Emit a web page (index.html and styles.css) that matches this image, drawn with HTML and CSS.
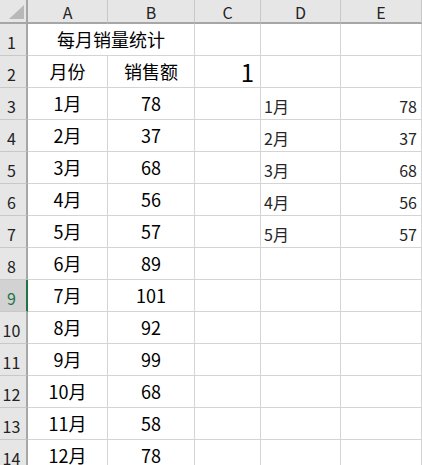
FILE: index.html
```html
<!DOCTYPE html>
<html lang="zh">
<head>
<meta charset="utf-8">
<link rel="stylesheet" href="styles.css">
</head>
<body>
<div class="sheet">
  <div class="corner"><span class="tri"></span></div>
  <div class="ch">A</div><div class="ch">B</div><div class="ch">C</div><div class="ch">D</div><div class="ch">E</div>

  <div class="rh">1</div>
  <div class="c merged ctr">每月销量统计</div><div class="c"></div><div class="c"></div><div class="c"></div>

  <div class="rh">2</div>
  <div class="c ctr">月份</div><div class="c ctr">销售额</div><div class="c big">1</div><div class="c"></div><div class="c"></div>

  <div class="rh">3</div>
  <div class="c ctr">1月</div><div class="c ctr">78</div><div class="c"></div><div class="c sm">1月</div><div class="c sm r">78</div>

  <div class="rh">4</div>
  <div class="c ctr">2月</div><div class="c ctr">37</div><div class="c"></div><div class="c sm">2月</div><div class="c sm r">37</div>

  <div class="rh">5</div>
  <div class="c ctr">3月</div><div class="c ctr">68</div><div class="c"></div><div class="c sm">3月</div><div class="c sm r">68</div>

  <div class="rh">6</div>
  <div class="c ctr">4月</div><div class="c ctr">56</div><div class="c"></div><div class="c sm">4月</div><div class="c sm r">56</div>

  <div class="rh">7</div>
  <div class="c ctr">5月</div><div class="c ctr">57</div><div class="c"></div><div class="c sm">5月</div><div class="c sm r">57</div>

  <div class="rh">8</div>
  <div class="c ctr">6月</div><div class="c ctr">89</div><div class="c"></div><div class="c"></div><div class="c"></div>

  <div class="rh sel">9</div>
  <div class="c ctr">7月</div><div class="c ctr">101</div><div class="c"></div><div class="c"></div><div class="c"></div>

  <div class="rh">10</div>
  <div class="c ctr">8月</div><div class="c ctr">92</div><div class="c"></div><div class="c"></div><div class="c"></div>

  <div class="rh">11</div>
  <div class="c ctr">9月</div><div class="c ctr">99</div><div class="c"></div><div class="c"></div><div class="c"></div>

  <div class="rh">12</div>
  <div class="c ctr">10月</div><div class="c ctr">68</div><div class="c"></div><div class="c"></div><div class="c"></div>

  <div class="rh">13</div>
  <div class="c ctr">11月</div><div class="c ctr">58</div><div class="c"></div><div class="c"></div><div class="c"></div>

  <div class="rh">14</div>
  <div class="c ctr">12月</div><div class="c ctr">78</div><div class="c"></div><div class="c"></div><div class="c"></div>
</div>
</body>
</html>
```

FILE: styles.css
```css
html, body {
  margin: 0;
  padding: 0;
  background: #ffffff;
  overflow: hidden;
}
body {
  width: 422px;
  height: 465px;
  font-family: "Noto Sans CJK SC", "Noto Sans", sans-serif;
  color: #000;
}
.sheet {
  display: grid;
  grid-template-columns: 28px 80px 87px 66px 80px 81px;
  grid-template-rows: 24px repeat(14, 32px);
}
.sheet > div {
  box-sizing: border-box;
  display: flex;
  white-space: nowrap;
}
.corner {
  background: #e6e6e6;
  border-right: 2px solid #a6a6a6;
  border-bottom: 2px solid #a6a6a6;
  position: relative;
}
.tri {
  position: absolute;
  right: 2px;
  bottom: 3px;
  width: 0;
  height: 0;
  border-left: 15px solid transparent;
  border-bottom: 14px solid #b8b8b8;
}
.ch {
  background: #e6e6e6;
  border-right: 1px solid #c8c8c8;
  border-bottom: 2px solid #a6a6a6;
  justify-content: center;
  align-items: center;
  font-size: 16px;
  color: #222;
  line-height: 1;
  padding-top: 1px;
}
.rh {
  background: #e6e6e6;
  border-right: 2px solid #a6a6a6;
  border-bottom: 1px solid #c8c8c8;
  justify-content: center;
  align-items: flex-end;
  font-size: 16px;
  line-height: 1;
  color: #222;
  padding-bottom: 5px;
  padding-right: 3px;
}
.rh.sel {
  background: #d2d2d2;
  color: #217346;
  border-right: 2px solid #217346;
}
.c {
  border-right: 1px solid #d4d4d4;
  border-bottom: 1px solid #d4d4d4;
  align-items: center;
  font-size: 18px;
  line-height: 1.2;
}
.ctr {
  justify-content: center;
  padding-top: 1px;
}
.merged {
  grid-column: span 2;
}
.big {
  justify-content: flex-end;
  font-size: 24px;
  padding-right: 6px;
  padding-top: 1px;
}
.sm {
  font-size: 16px;
  color: #262626;
  align-items: flex-end;
  padding-bottom: 3px;
  padding-left: 3px;
}
.sm.r {
  justify-content: flex-end;
  padding-left: 0;
  padding-right: 4px;
}
```
